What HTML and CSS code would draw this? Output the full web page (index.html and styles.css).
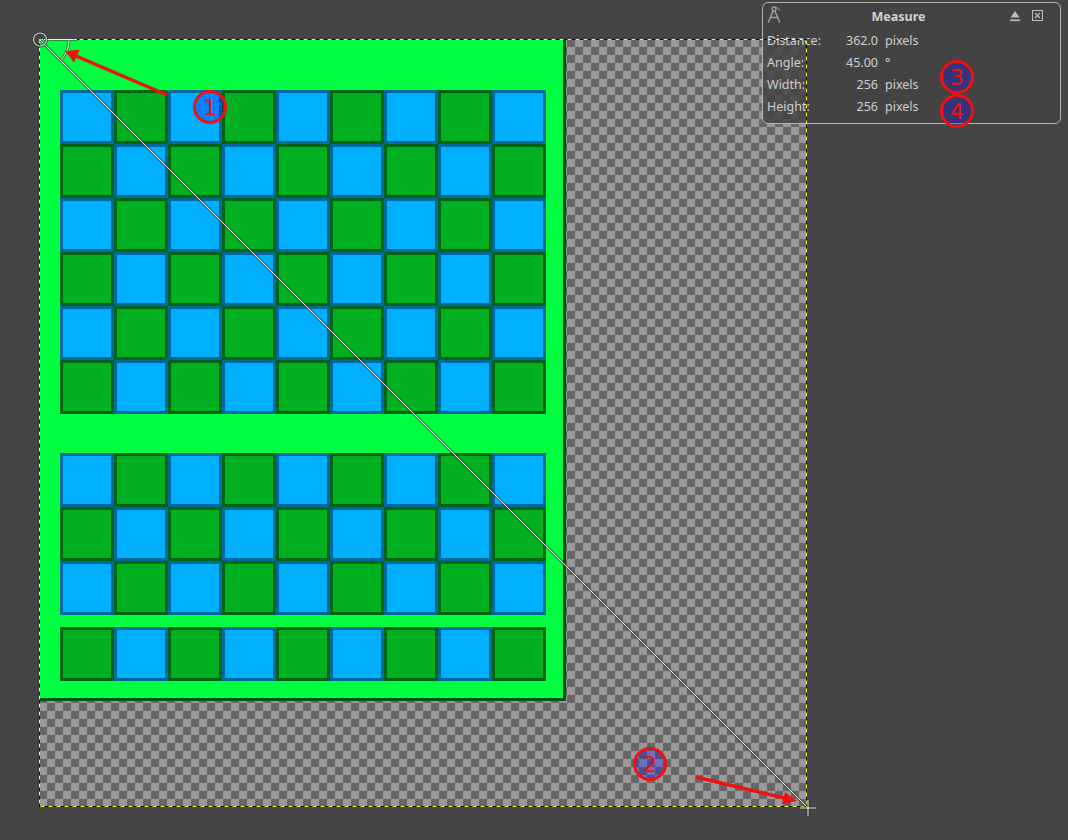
FILE: index.html
```html
<!DOCTYPE html>
<html>
<head>
<meta charset="utf-8">
<title>Measure</title>
<link rel="stylesheet" href="styles.css">
</head>
<body>
<div class="stage">
  <div class="canvas">
    <div class="layer">
      <div class="block">
        <div class="cb"></div><div class="cg"></div><div class="cb"></div><div class="cg"></div><div class="cb"></div><div class="cg"></div><div class="cb"></div><div class="cg"></div><div class="cb"></div>
        <div class="cg"></div><div class="cb"></div><div class="cg"></div><div class="cb"></div><div class="cg"></div><div class="cb"></div><div class="cg"></div><div class="cb"></div><div class="cg"></div>
        <div class="cb"></div><div class="cg"></div><div class="cb"></div><div class="cg"></div><div class="cb"></div><div class="cg"></div><div class="cb"></div><div class="cg"></div><div class="cb"></div>
        <div class="cg"></div><div class="cb"></div><div class="cg"></div><div class="cb"></div><div class="cg"></div><div class="cb"></div><div class="cg"></div><div class="cb"></div><div class="cg"></div>
        <div class="cb"></div><div class="cg"></div><div class="cb"></div><div class="cg"></div><div class="cb"></div><div class="cg"></div><div class="cb"></div><div class="cg"></div><div class="cb"></div>
        <div class="cg"></div><div class="cb"></div><div class="cg"></div><div class="cb"></div><div class="cg"></div><div class="cb"></div><div class="cg"></div><div class="cb"></div><div class="cg"></div>
      </div>
      <div class="block block-2">
        <div class="cb"></div><div class="cg"></div><div class="cb"></div><div class="cg"></div><div class="cb"></div><div class="cg"></div><div class="cb"></div><div class="cg"></div><div class="cb"></div>
        <div class="cg"></div><div class="cb"></div><div class="cg"></div><div class="cb"></div><div class="cg"></div><div class="cb"></div><div class="cg"></div><div class="cb"></div><div class="cg"></div>
        <div class="cb"></div><div class="cg"></div><div class="cb"></div><div class="cg"></div><div class="cb"></div><div class="cg"></div><div class="cb"></div><div class="cg"></div><div class="cb"></div>
      </div>
      <div class="block block-3">
        <div class="cg"></div><div class="cb"></div><div class="cg"></div><div class="cb"></div><div class="cg"></div><div class="cb"></div><div class="cg"></div><div class="cb"></div><div class="cg"></div>
      </div>
    </div>
  </div>

  <div class="panel">
    <div class="head">
      <svg class="tool-icon" width="20" height="20" viewBox="0 0 20 20">
        <circle cx="8" cy="4" r="2" fill="none" stroke="#9a9a9a" stroke-width="1.4"/>
        <path d="M7 6 L2.5 17 M9 6 L13.5 17 M4.5 12.5 L11.5 12.5" fill="none" stroke="#9a9a9a" stroke-width="1.6" stroke-linecap="round"/>
        <path d="M9.5 2 A6 6 0 0 1 14 6" fill="none" stroke="#9a9a9a" stroke-width="1"/>
      </svg>
      <div class="title">Measure</div>
      <div class="controls">
        <svg width="12" height="12" viewBox="0 0 12 12">
          <path d="M1.5 7.5 L6 1 L10.5 7.5 Z" fill="#bdbdbd"/>
          <rect x="1" y="9.5" width="10" height="1.6" fill="#bdbdbd"/>
        </svg>
        <svg width="11" height="11" viewBox="0 0 11 11">
          <rect x="0.5" y="0.5" width="10" height="10" fill="none" stroke="#bdbdbd" stroke-width="1"/>
          <path d="M3 3 L8 8 M8 3 L3 8" stroke="#bdbdbd" stroke-width="1.2"/>
        </svg>
      </div>
    </div>
    <div class="rows">
      <div class="row"><span class="lbl">Distance:</span><span class="val">362.0</span><span class="unit">pixels</span></div>
      <div class="row"><span class="lbl">Angle:</span><span class="val">45.00</span><span class="unit">°</span></div>
      <div class="row"><span class="lbl">Width:</span><span class="val">256</span><span class="unit">pixels</span></div>
      <div class="row"><span class="lbl">Height:</span><span class="val">256</span><span class="unit">pixels</span></div>
    </div>
  </div>

  <svg class="overlay" width="1068" height="840" viewBox="0 0 1068 840">
    <!-- canvas boundary -->
    <rect x="39.5" y="39.5" width="767" height="767" fill="none" stroke="#000" stroke-width="1"/>
    <rect x="39.5" y="39.5" width="767" height="767" fill="none" stroke="#ffff00" stroke-width="1" stroke-dasharray="4 4"/>

    <!-- measure line -->
    <line x1="40" y1="40" x2="807" y2="807" stroke="rgba(60,60,60,0.55)" stroke-width="3"/>
    <line x1="40" y1="40" x2="807" y2="807" stroke="#f0f0f0" stroke-width="1"/>
    <line x1="44" y1="39.5" x2="77" y2="39.5" stroke="rgba(60,60,60,0.55)" stroke-width="3"/>
    <line x1="44" y1="39.5" x2="77" y2="39.5" stroke="#f0f0f0" stroke-width="1"/>
    <path d="M69 40 A29 29 0 0 1 60.5 60.5" fill="none" stroke="rgba(60,60,60,0.5)" stroke-width="3"/>
    <path d="M69 40 A29 29 0 0 1 60.5 60.5" fill="none" stroke="#e0e0e0" stroke-width="1"/>
    <circle cx="40" cy="39.5" r="6.5" fill="none" stroke="rgba(40,40,40,0.6)" stroke-width="3"/>
    <circle cx="40" cy="39.5" r="6.5" fill="none" stroke="#d0d0d0" stroke-width="1.2"/>
    <!-- end crosshair -->
    <path d="M800 808 H816 M808 800 V816" stroke="rgba(40,40,40,0.6)" stroke-width="3"/>
    <path d="M800 808 H816 M808 800 V816" stroke="#f0f0f0" stroke-width="1"/>

    <!-- annotation arrows -->
    <line x1="167" y1="95" x2="76" y2="56" stroke="#f21010" stroke-width="3.5"/>
    <polygon points="65,51 79.7,49.7 74.1,62.5" fill="#f21010"/>
    <line x1="696" y1="777" x2="784" y2="798" stroke="#f21010" stroke-width="3.5"/>
    <polygon points="797,801 782,804 785,792" fill="#f21010"/>

    <!-- annotation circles -->
    <g class="mark">
      <circle cx="210" cy="107" r="15.5"/>
      <text x="210" y="115">1</text>
    </g>
    <g class="mark">
      <circle cx="650" cy="764" r="15.5"/>
      <text x="650" y="772">2</text>
    </g>
    <g class="mark">
      <circle cx="957" cy="77" r="15.5"/>
      <text x="957" y="85">3</text>
    </g>
    <g class="mark">
      <circle cx="957" cy="111" r="15.5"/>
      <text x="957" y="119">4</text>
    </g>
  </svg>
</div>
</body>
</html>
```

FILE: styles.css
```css
html, body {
  margin: 0;
  padding: 0;
  background: #454545;
}

body {
  width: 1068px;
  height: 840px;
  overflow: hidden;
  font-family: "Noto Sans", "DejaVu Sans", sans-serif;
}

.stage {
  position: relative;
  width: 1068px;
  height: 840px;
  box-sizing: border-box;
  padding: 40px 0 0 40px;
}

.canvas {
  width: 766px;
  height: 766px;
  background: repeating-conic-gradient(#999999 0 25%, #666666 0 50%) -1px -1px / 16px 16px;
}

.layer {
  width: 526px;
  height: 661px;
  box-sizing: border-box;
  background: #00ff40;
  border-right: 3px solid #005212;
  border-bottom: 3px solid #005212;
  padding: 50px 0 0 20px;
}

.block {
  display: grid;
  grid-template-columns: repeat(9, 54px);
  grid-auto-rows: 54px;
}

.block-2 { margin-top: 39px; }
.block-3 { margin-top: 12px; }

.cb, .cg {
  box-sizing: border-box;
  border: 3px solid;
}

.cb {
  background: #00b0ff;
  border-color: #006a9e;
}

.cg {
  background: #00b020;
  border-color: #006414;
}

/* floating Measure dialog */
.panel {
  position: absolute;
  left: 762px;
  top: 2px;
  width: 299px;
  height: 122px;
  box-sizing: border-box;
  border: 1px solid #b4b4b4;
  border-radius: 6px;
  background: rgba(68, 68, 68, 0.86);
  color: #cfcfcf;
  font-size: 12.5px;
  padding: 0 4px;
}

.head {
  display: grid;
  grid-template-columns: 24px 1fr 50px;
  align-items: center;
  height: 26px;
}

.tool-icon {
  margin-left: -1px;
  margin-top: -2px;
}

.title {
  text-align: center;
  font-weight: bold;
  font-size: 12.5px;
  color: #d2d2d2;
}

.controls {
  display: flex;
  align-items: center;
  gap: 11px;
  padding-left: 3px;
  margin-top: -1px;
}

.rows {
  display: flex;
  flex-direction: column;
}

.row {
  display: flex;
  align-items: center;
  height: 22px;
}

.lbl { width: 71px; }
.val { width: 40px; text-align: right; }
.unit { padding-left: 7px; }

/* annotations drawn over everything */
.overlay {
  position: absolute;
  left: 0;
  top: 0;
  pointer-events: none;
}

.mark circle {
  fill: rgba(20, 20, 255, 0.3);
  stroke: #f21010;
  stroke-width: 3;
}

.mark text {
  fill: #f21010;
  font-family: "DejaVu Sans", sans-serif;
  font-size: 22px;
  text-anchor: middle;
}
```
